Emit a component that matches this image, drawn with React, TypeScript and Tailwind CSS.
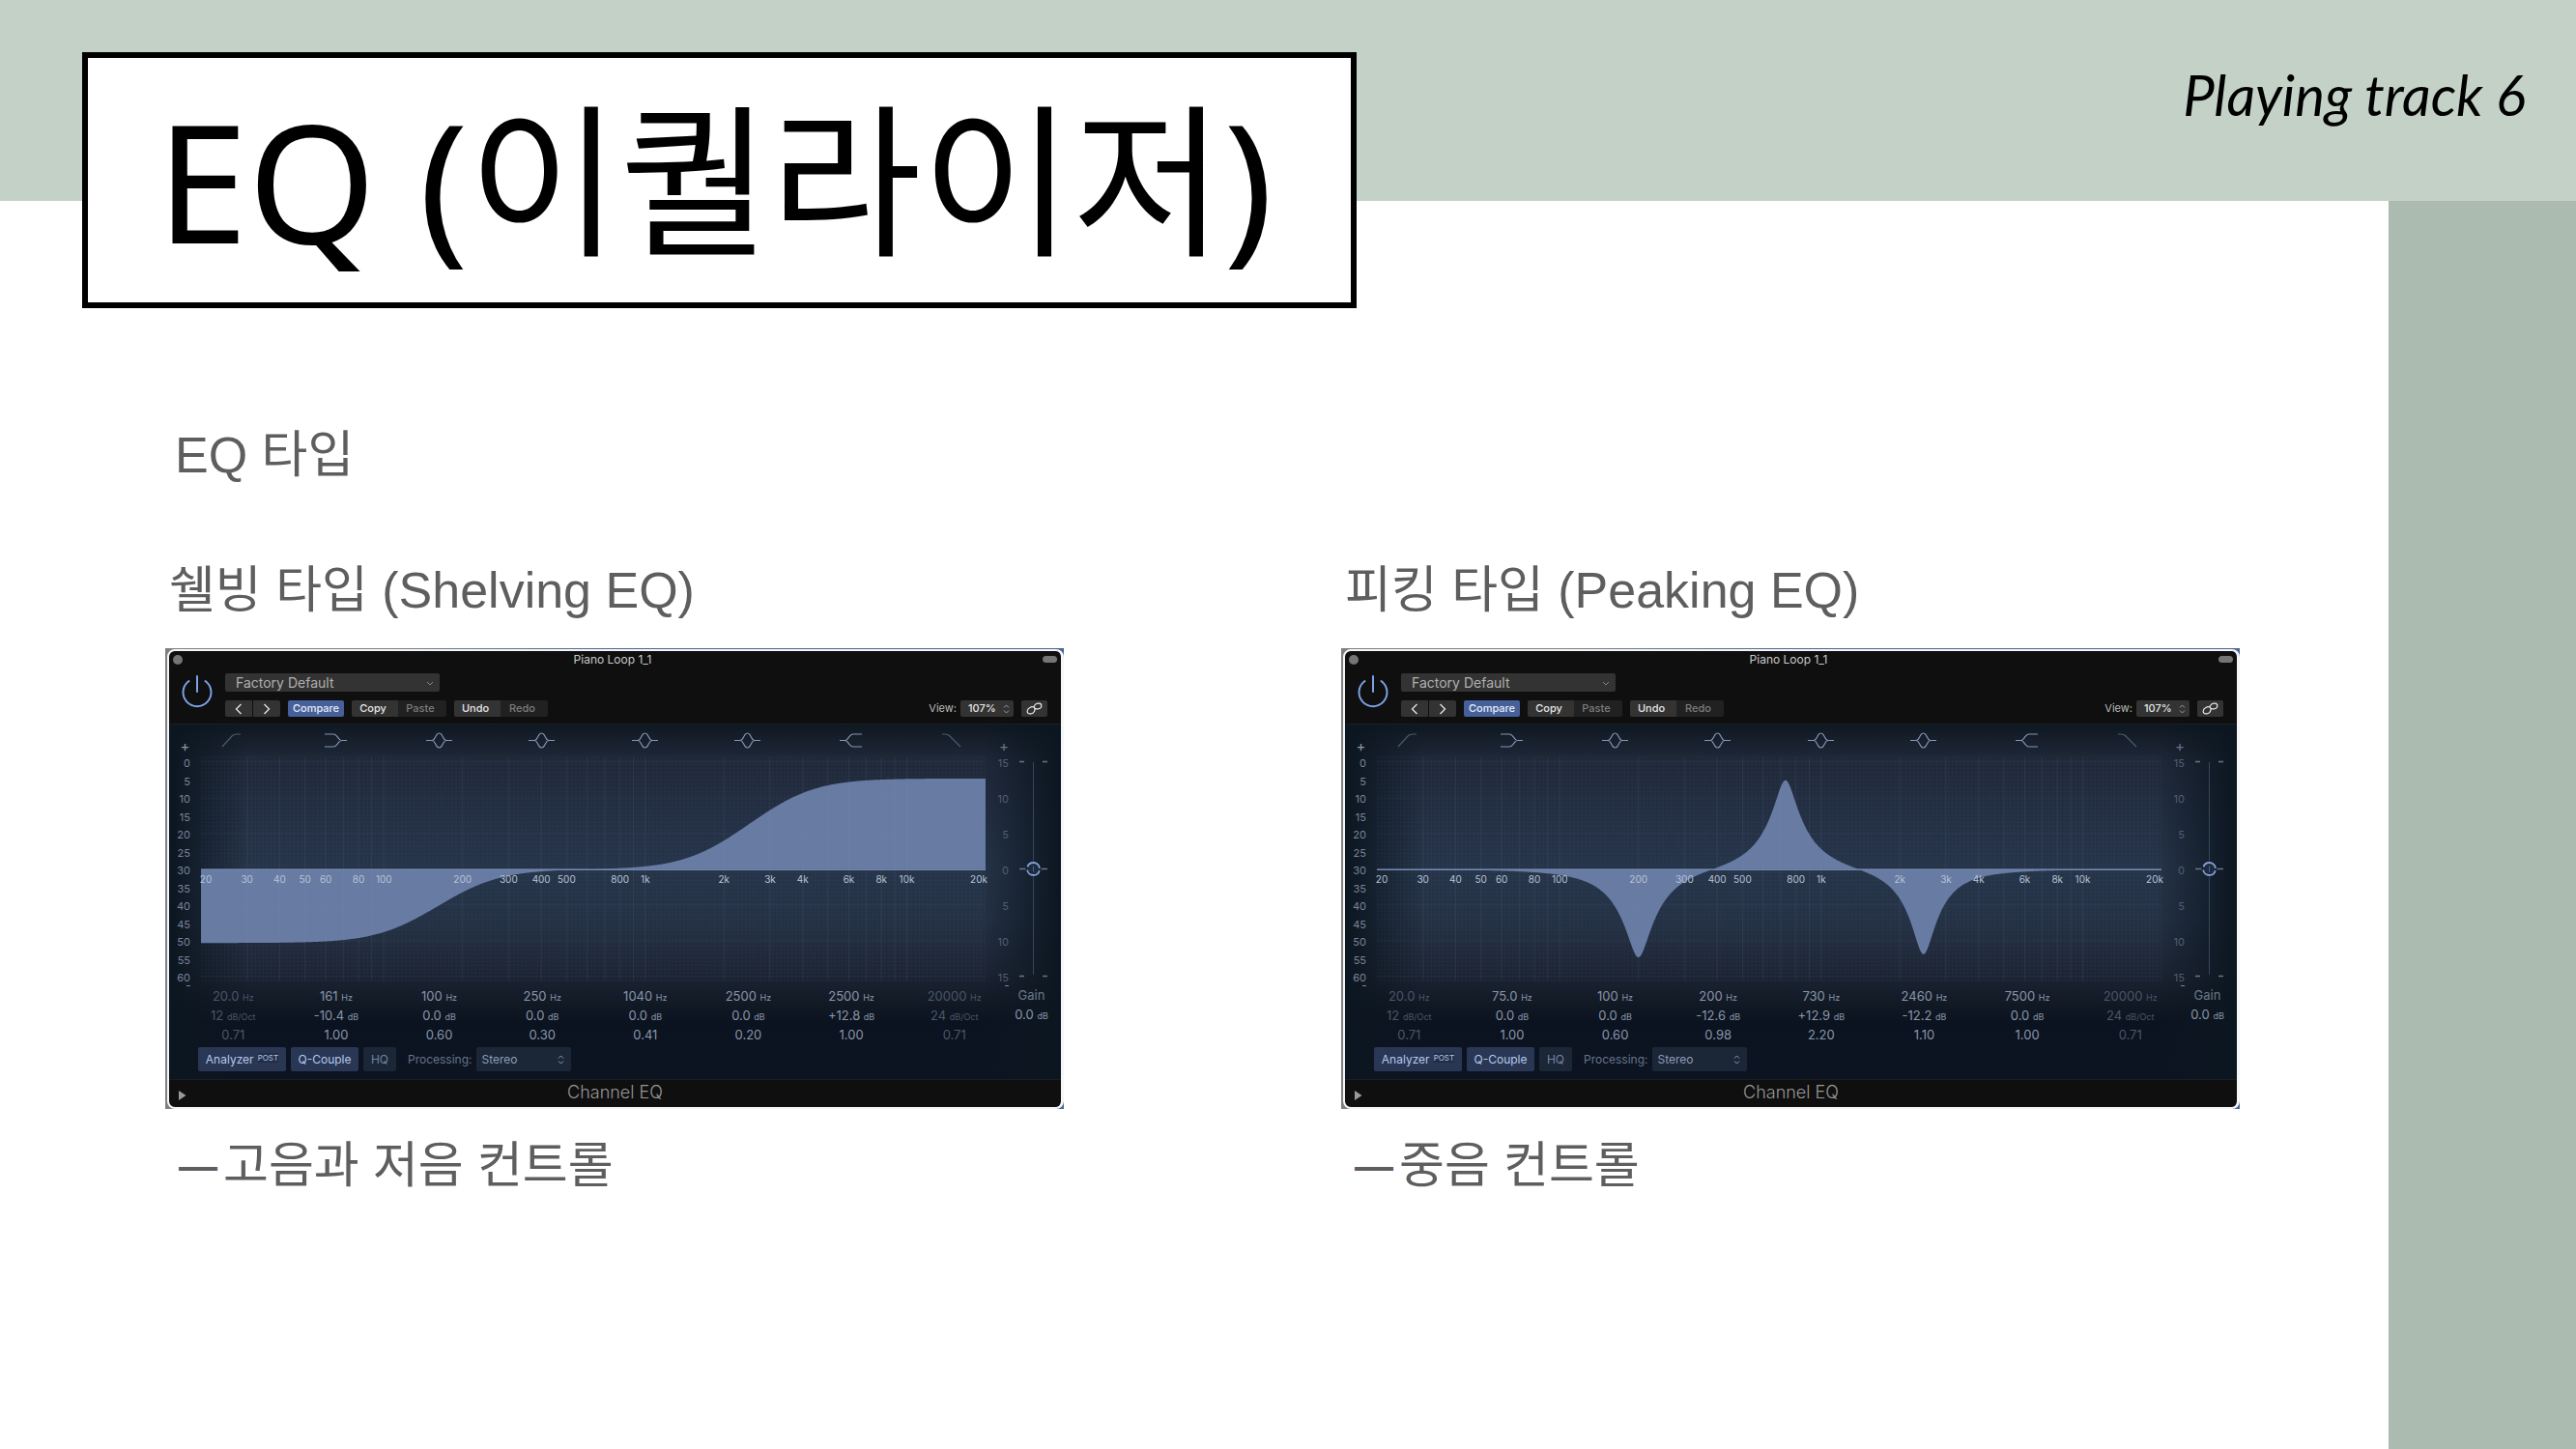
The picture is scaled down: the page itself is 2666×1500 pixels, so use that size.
import React, { useId } from "react";

type Band = { freq: string; gain: string; unit: string; q: string; dim?: boolean };
type Response = (f: number) => number;

const CHART_W = 813;
const CHART_H = 234;
const ZERO_Y = 117;
const DB = 7.35;

const xOf = (f: number) => (Math.log10(f / 20) / 3) * CHART_W;

/* Second-order shelf response in dB; w is the frequency ratio seen from the flat side. */
const shelf = (w: number, db: number) => {
  const a = Math.pow(10, Math.abs(db) / 40);
  const m = (w * Math.sqrt(a)) / 0.71;
  const num = Math.hypot(1 - a * w * w, m);
  const den = Math.hypot(a - w * w, m);
  return Math.sign(db) * 20 * Math.log10((a * num) / den);
};

const bell = (f: number, fc: number, db: number, k: number) => {
  const a = Math.pow(10, Math.abs(db) / 40);
  const d = f / fc - fc / f;
  return Math.sign(db) * 10 * Math.log10((d * d + a * a * k * k) / (d * d + (k * k) / (a * a)));
};

const shelving: Response = (f) => shelf(161 / f, -10.4) + shelf(f / 2500, 12.8);
const peaking: Response = (f) =>
  bell(f, 200, -12.6, 0.35) + bell(f, 730, 12.9, 0.345) + bell(f, 2460, -12.2, 0.31);

const areaPath = (r: Response) => {
  let d = `M0 ${ZERO_Y}`;
  for (let x = 0; x <= CHART_W; x += 1) {
    const f = 20 * Math.pow(10, (x / CHART_W) * 3);
    d += `L${x} ${(ZERO_Y - r(f) * DB).toFixed(2)}`;
  }
  return d + `L${CHART_W} ${ZERO_Y}Z`;
};

const gridFreqs = [30, 40, 50, 60, 70, 80, 90, 100, 200, 300, 400, 500, 600, 700, 800, 900, 1000, 2000, 3000, 4000, 5000, 6000, 7000, 8000, 9000, 10000];
const freqLabels: [number, string][] = [
  [20, "20"], [30, "30"], [40, "40"], [50, "50"], [60, "60"], [80, "80"], [100, "100"], [200, "200"],
  [300, "300"], [400, "400"], [500, "500"], [800, "800"], [1000, "1k"], [2000, "2k"], [3000, "3k"],
  [4000, "4k"], [6000, "6k"], [8000, "8k"], [10000, "10k"], [20000, "20k"],
];

function Chart({ response, label }: { response: Response; label: string }) {
  const id = useId();
  return (
    <svg viewBox={`0 0 ${CHART_W} ${CHART_H}`} className="block w-full overflow-visible" role="img" aria-label={label}>
      <defs>
        <pattern id={id} width="4" height="4" patternUnits="userSpaceOnUse">
          <path d="M0 .5H4M.5 0V4" stroke="#8fa6cc" strokeOpacity=".03" />
        </pattern>
      </defs>
      <rect width={CHART_W} height={CHART_H} fill={`url(#${id})`} />
      <path d={areaPath(response)} fill="#677ba3" />
      <path d={`M0 ${ZERO_Y}.5H${CHART_W}`} stroke="#7388ad" strokeWidth="1.5" />
      {gridFreqs.map((f) => (
        <path key={f} d={`M${xOf(f)} 1V${CHART_H - 1}`} stroke="#8fa6cc" strokeOpacity=".1" />
      ))}
      {[6, 43, 80, 154, 191, 228].map((y) => (
        <path key={y} d={`M0 ${y}H${CHART_W}`} stroke="#8fa6cc" strokeOpacity=".08" />
      ))}
      {freqLabels.map(([f, t]) => (
        <text
          key={f}
          x={xOf(f) + (f === 20 ? 5 : f === 20000 ? -7 : 0)}
          y="131"
          textAnchor="middle"
          className="fill-[#b9c3d6] text-[10px]"
        >
          {t}
        </text>
      ))}
    </svg>
  );
}

const shapes = {
  lowcut: "M1 17L11 6Q13 4 16 4H20",
  lowshelf: "M0 4H9Q11 4 12.500 6L15 9Q16 10.500 18 10.500H23M0 17H9Q11 17 12.500 15L15 12Q16 10.500 18 10.500",
  bell: "M0 10.500H6Q8 10.500 9 8L11 4.500Q13.500 1.500 16 4.500L18 8Q19 10.500 21 10.500H27M6 10.500Q8 10.500 9 13L11 16.500Q13.500 19.500 16 16.500L18 13Q19 10.500 21 10.500",
  highshelf: "M23 4H14Q12 4 10.500 6L8 9Q7 10.500 5 10.500H0M23 17H14Q12 17 10.500 15L8 12Q7 10.500 5 10.500",
  highcut: "M0 4H3Q6 4 8 6L19 17",
};
const bandShapes: [keyof typeof shapes, number][] = [
  ["lowcut", 20], ["lowshelf", 23], ["bell", 27], ["bell", 27], ["bell", 27], ["bell", 27], ["highshelf", 23], ["highcut", 20],
];
const bandNames = ["Low cut", "Low shelf", "Bell 1", "Bell 2", "Bell 3", "Bell 4", "High shelf", "High cut"];

function UpDown({ className }: { className: string }) {
  return (
    <svg viewBox="0 0 7 10" className={className} fill="none" stroke="currentColor" aria-hidden="true">
      <path d="M1 3.500L3.500 1L6 3.500M1 6.500L3.500 9L6 6.500" />
    </svg>
  );
}

const darkBtn = "flex h-[17px] items-center justify-center bg-[#333333] text-[11px] font-medium text-[#e6e6e6]";
const mutedBtn = "flex h-[17px] items-center justify-center bg-[#212121] text-[11px] font-medium text-[#7d7d7d]";

function PluginWindow({ bands, response, label }: { bands: Band[]; response: Response; label: string }) {
  const scale = Array.from({ length: 13 }, (_, i) => i * 5);
  const gainScale = [15, 10, 5, 0, 5, 10, 15];
  return (
    <section
      aria-label={label}
      className="bg-[linear-gradient(to_right,#808080,#7d8286_25%,#4b6694_50%,#4b6694)] pt-px pl-0.5 font-['Inter','Liberation_Sans',sans-serif] leading-none font-normal"
    >
      <div className="overflow-hidden rounded-lg border-2 border-r-[3px] border-[#f4f6f8] bg-[#0f0f0f]">
        <div className="flex h-[17px] items-center justify-between px-1">
          <button type="button" aria-label="Close" className="size-2.5 rounded-full bg-[#757575]" />
          <h3 className="text-[12px] leading-[16px] text-[#c9c9c9]">Piano Loop 1_1</h3>
          <button type="button" aria-label="Minimize" className="h-[7px] w-[15px] rounded-full bg-[#757575]" />
        </div>

        <div className="flex h-[58px] gap-3 pt-1.5 pr-3.5 pl-3">
          <button type="button" aria-label="Power" className="h-[36px] text-[#7ba1e6]">
            <svg viewBox="0 0 34 36" className="h-[36px] w-[34px]" fill="none" stroke="currentColor" strokeWidth="2" strokeLinecap="round" aria-hidden="true">
              <path d="M17 3V19M8.500 8A14.500 14.500 0 1 0 25.500 8" />
            </svg>
          </button>
          <div className="flex flex-1 flex-col gap-[9px]">
            <div className="relative h-[19px] w-[222px]">
              <select aria-label="Preset" className="block h-[19px] w-full appearance-none rounded-xs bg-[#333333] pl-[11px] text-[14px] leading-[19px] text-[#b0b0b0]">
                <option>Factory Default</option>
              </select>
              <svg viewBox="0 0 8 5" className="absolute top-2 right-1.5 h-[5px] w-2 text-[#858585]" fill="none" stroke="currentColor" aria-hidden="true">
                <path d="M1 1L4 4L7 1" />
              </svg>
            </div>
            <div className="flex items-center">
              <button type="button" aria-label="Previous" className={`${darkBtn} w-7 rounded-l-xs`}>
                <svg viewBox="0 0 8 12" className="h-3 w-2" fill="none" stroke="currentColor" strokeWidth="1.300"><path d="M6.500 1L1.500 6L6.500 11" /></svg>
              </button>
              <button type="button" aria-label="Next" className={`${darkBtn} ml-px w-7 rounded-r-xs`}>
                <svg viewBox="0 0 8 12" className="h-3 w-2" fill="none" stroke="currentColor" strokeWidth="1.300"><path d="M1.500 1L6.500 6L1.500 11" /></svg>
              </button>
              <button type="button" className="ml-2 flex h-[17px] w-[58px] items-center justify-center rounded-xs bg-[#46609a] text-[11px] font-medium text-[#e8edf8]">Compare</button>
              <button type="button" className={`${darkBtn} ml-2 w-12 rounded-l-xs pr-1`}>Copy</button>
              <button type="button" className={`${mutedBtn} w-[50px] rounded-r-xs pr-1`}>Paste</button>
              <button type="button" className={`${darkBtn} ml-2 w-12 rounded-l-xs pr-1`}>Undo</button>
              <button type="button" className={`${mutedBtn} w-[49px] rounded-r-xs pr-1`}>Redo</button>
              <label className="ml-auto flex items-center gap-1 text-[11px] text-[#bdbdbd]">
                View:
                <span className="relative block">
                  <select className="block h-[17px] w-[55px] appearance-none rounded-xs bg-[#333333] pl-2 text-[11px] leading-[17px] font-medium text-[#e6e6e6]">
                    <option>107%</option>
                  </select>
                  <UpDown className="absolute top-1 right-1 h-[10px] w-[7px] text-[#9a9a9a]" />
                </span>
              </label>
              <button type="button" aria-label="Link" className={`${darkBtn} ml-2 w-[27px] rounded-xs`}>
                <svg viewBox="0 0 17 13" className="h-[13px] w-[17px]" fill="none" stroke="currentColor" strokeWidth="1.200" strokeLinecap="round">
                  <path d="M8.500 3.500Q10 1.200 12 1.200H13.500Q16 1.500 15.800 4Q15.300 6.800 12.500 6.800H10.500Q8 6.500 8.200 4.200M8.500 9.500Q7 11.800 5 11.800H3.500Q.9 11.500 1.200 9Q1.500 6.500 4 5.500Q6 4 8 5Q9.800 6.500 8.500 9.500" />
                </svg>
              </button>
            </div>
          </div>
        </div>

        <div className="border-t border-[#1a2026] bg-[linear-gradient(to_right,#0c1620,transparent_9%,transparent_91%,#0c1620),linear-gradient(to_bottom,#0f1821,#1f2838_10%,#222d41_22%,#263449_40%,#243145_55%,#1d2534_70%,#101924_79%,#0b1320_84%,#0c1421)]">
          <div className="flex h-[33px] items-end text-[15px] leading-[20px] text-[#8b97a8]">
            <span className="w-[33px] text-center">+</span>
            <div className="z-10 -mx-5 grid flex-1 grid-cols-8 self-center">
              {bandShapes.map(([s, w], i) => (
                <button
                  key={bandNames[i]}
                  type="button"
                  aria-label={bandNames[i]}
                  className={i === 0 || i === 7 ? "mx-auto pr-1 text-[#4d596b]" : "mx-auto text-[#8496b5]"}
                >
                  <svg viewBox={`0 0 ${w} 21`} style={{ width: w }} className="h-[21px]" fill="none" stroke="currentColor" strokeWidth="1.200" aria-hidden="true">
                    <path d={shapes[s]} />
                  </svg>
                </button>
              ))}
            </div>
            <span className="w-[78px] pl-[14px] text-[#667386]">+</span>
          </div>

          <div className="flex">
            <div className="-mt-0.5 flex w-[33px] flex-col items-end pr-[11px] text-[11px] leading-[18px] text-[#78859a]">
              <div className="flex h-[240px] flex-col justify-between text-right">
                {scale.map((n) => (
                  <span key={n}>{n}</span>
                ))}
              </div>
              <span className="-mt-px h-px w-1 bg-[#78859a]" />
            </div>
            <div className="min-w-0 flex-1">
              <Chart response={response} label={`${label} response curve`} />
            </div>
            <div className="-mt-0.5 flex w-[78px] text-[11px] leading-[18px] text-[#525e72]">
              <div className="flex w-[24px] flex-col items-end">
                <div className="flex h-[240px] flex-col justify-between text-right">
                  {gainScale.map((n, i) => (
                    <span key={i}>{n}</span>
                  ))}
                </div>
                <span className="-mt-px h-px w-1 bg-[#78859a]" />
              </div>
              <div className="relative h-[240px] w-[54px]">
                <svg viewBox="0 0 54 240" className="size-full" fill="none" aria-hidden="true">
                  <path d="M25.500 8V228" stroke="#38445a" />
                  <path d="M11 7.500H16M35 7.500H40M11 118.500H40M11 229.500H16M35 229.500H40" stroke="#66748c" strokeWidth="1.300" />
                  <circle cx="25.500" cy="118.500" r="8" fill="#101c2e" />
                  <circle cx="25.500" cy="118.500" r="6.500" fill="#1d2a40" stroke="#86a0cf" strokeWidth="1.800" strokeDasharray="17 3.420" strokeDashoffset="-1.700" />
                  <path d="M25.500 115.500V121.500" stroke="#4a6390" />
                </svg>
                <input type="range" aria-label="Gain" min={-15} max={15} defaultValue={0} className="absolute inset-y-0 left-[17px] w-[17px] opacity-0 [writing-mode:vertical-lr]" />
              </div>
            </div>
          </div>

          <div className="mt-px flex items-start">
            <div className="ml-[13px] flex-1">
              <table className="w-full table-fixed text-center text-[13px] leading-[19px]">
                <tbody>
                  <tr>
                    {bands.map((b, i) => (
                      <td key={i} className={b.dim ? "p-0 text-[#4b5667]" : "p-0 text-[#8a96aa]"}>
                        {b.freq} <span className="text-[9px]">Hz</span>
                      </td>
                    ))}
                  </tr>
                  <tr>
                    {bands.map((b, i) => (
                      <td key={i} className={b.dim ? "p-0 text-[#4b5667]" : "p-0 text-[#8a96aa]"}>
                        {b.gain} <span className="text-[9px]">{b.unit}</span>
                      </td>
                    ))}
                  </tr>
                  <tr>
                    {bands.map((b, i) => (
                      <td key={i} className={b.dim ? "p-0 text-[#4b5667]" : "p-0 text-[#8a96aa]"}>
                        {b.q}
                      </td>
                    ))}
                  </tr>
                </tbody>
              </table>
            </div>
            <div className="-mt-0.5 w-[57px] pr-1 text-center text-[13px] leading-[20px]">
              <div className="text-[#6c788c]">Gain</div>
              <div className="text-[#8a96aa]">
                0.0 <span className="text-[9px]">dB</span>
              </div>
            </div>
          </div>

          <div className="mt-[3px] flex items-center pb-2 pl-[30px] text-[12px]">
            <button type="button" className="flex h-[25px] w-[91px] items-center justify-center gap-1 rounded-xs bg-[#293754] text-[#b6c8ea]">
              Analyzer <span className="mb-1 bg-[#222d45] text-[8px] leading-[10px]">POST</span>
            </button>
            <button type="button" className="ml-[5px] h-[25px] w-[70px] rounded-xs bg-[#293754] text-[#b6c8ea]">Q-Couple</button>
            <button type="button" className="ml-[5px] h-[25px] w-[34px] rounded-xs bg-[#1b2637] text-[#7384a0]">HQ</button>
            <label className="ml-3 flex items-center gap-1 text-[#66738a]">
              Processing:
              <span className="relative block">
                <select className="block h-[25px] w-[98px] appearance-none rounded-xs bg-[#1b2637] pl-1.5 text-[12px] text-[#8c9cb8]">
                  <option>Stereo</option>
                </select>
                <UpDown className="absolute top-2 right-[7px] h-[10px] w-[7px] text-[#8c9cb8]" />
              </span>
            </label>
          </div>
        </div>

        <div className="relative flex h-[29px] items-center justify-center border-t border-[#1a1d22]">
          <button type="button" aria-label="Show details" className="absolute left-2.5 text-[#9a9a9a]">
            <svg viewBox="0 0 8 10" className="mt-1 h-[10px] w-2" fill="currentColor"><path d="M0 0L7.500 5L0 10Z" /></svg>
          </button>
          <span className="pb-0.5 text-[18px] leading-[24px] font-light text-[#989898]">Channel EQ</span>
        </div>
      </div>
    </section>
  );
}

function Caption({ children }: { children: React.ReactNode }) {
  return (
    <p className="mt-[27px] flex items-center pl-3.5 text-[51px]">
      <span className="mr-1.5 text-[40px] font-bold">—</span>
      {children}
    </p>
  );
}

const b = (freq: string, gain: string, q: string): Band => ({ freq, gain, unit: "dB", q });
const low: Band = { freq: "20.0", gain: "12", unit: "dB/Oct", q: "0.71", dim: true };
const high: Band = { freq: "20000", gain: "24", unit: "dB/Oct", q: "0.71", dim: true };

const shelvingBands = [low, b("161", "-10.4", "1.00"), b("100", "0.0", "0.60"), b("250", "0.0", "0.30"), b("1040", "0.0", "0.41"), b("2500", "0.0", "0.20"), b("2500", "+12.8", "1.00"), high];
const peakingBands = [low, b("75.0", "0.0", "1.00"), b("100", "0.0", "0.60"), b("200", "-12.6", "0.98"), b("730", "+12.9", "2.20"), b("2460", "-12.2", "1.10"), b("7500", "0.0", "1.00"), high];

export default function App() {
  return (
    <div className="flex min-h-screen flex-col bg-white">
      <header className="flex h-[208px] items-start justify-between bg-[#c3d1c6] pr-[52px] pl-[85px]">
        <h1 className="mt-[54px] flex h-[265px] shrink-0 items-center border-6 border-black bg-white pr-[80px] pb-0.5 pl-[71px] font-['Noto_Sans','Noto_Sans_CJK_KR',sans-serif] text-[170px] leading-none font-normal whitespace-nowrap text-black">
          EQ (이퀄라이저)
        </h1>
        <p className="mt-[66px] font-['Lato',sans-serif] text-[58px] leading-[64px] whitespace-nowrap text-black italic">Playing track 6</p>
      </header>
      <div className="flex flex-1">
        <main className="min-w-0 flex-1 pt-[231px] pr-[154px] pl-[171px] font-['Liberation_Sans','Noto_Sans_CJK_KR',sans-serif] text-[52px] leading-[64px] text-[#5e5e5e]">
          <p className="mb-[76px] pl-2.5">EQ 타입</p>
          <div className="grid grid-cols-2 gap-[287px]">
            <article>
              <h2 className="mb-[28px] pl-1">쉘빙 타입 (Shelving EQ)</h2>
              <PluginWindow bands={shelvingBands} response={shelving} label="Shelving EQ" />
              <Caption>고음과 저음 컨트롤</Caption>
            </article>
            <article>
              <h2 className="mb-[28px] pl-1">피킹 타입 (Peaking EQ)</h2>
              <PluginWindow bands={peakingBands} response={peaking} label="Peaking EQ" />
              <Caption>중음 컨트롤</Caption>
            </article>
          </div>
        </main>
        <aside className="w-[194px] shrink-0 bg-[#abbbb0]" />
      </div>
    </div>
  );
}
